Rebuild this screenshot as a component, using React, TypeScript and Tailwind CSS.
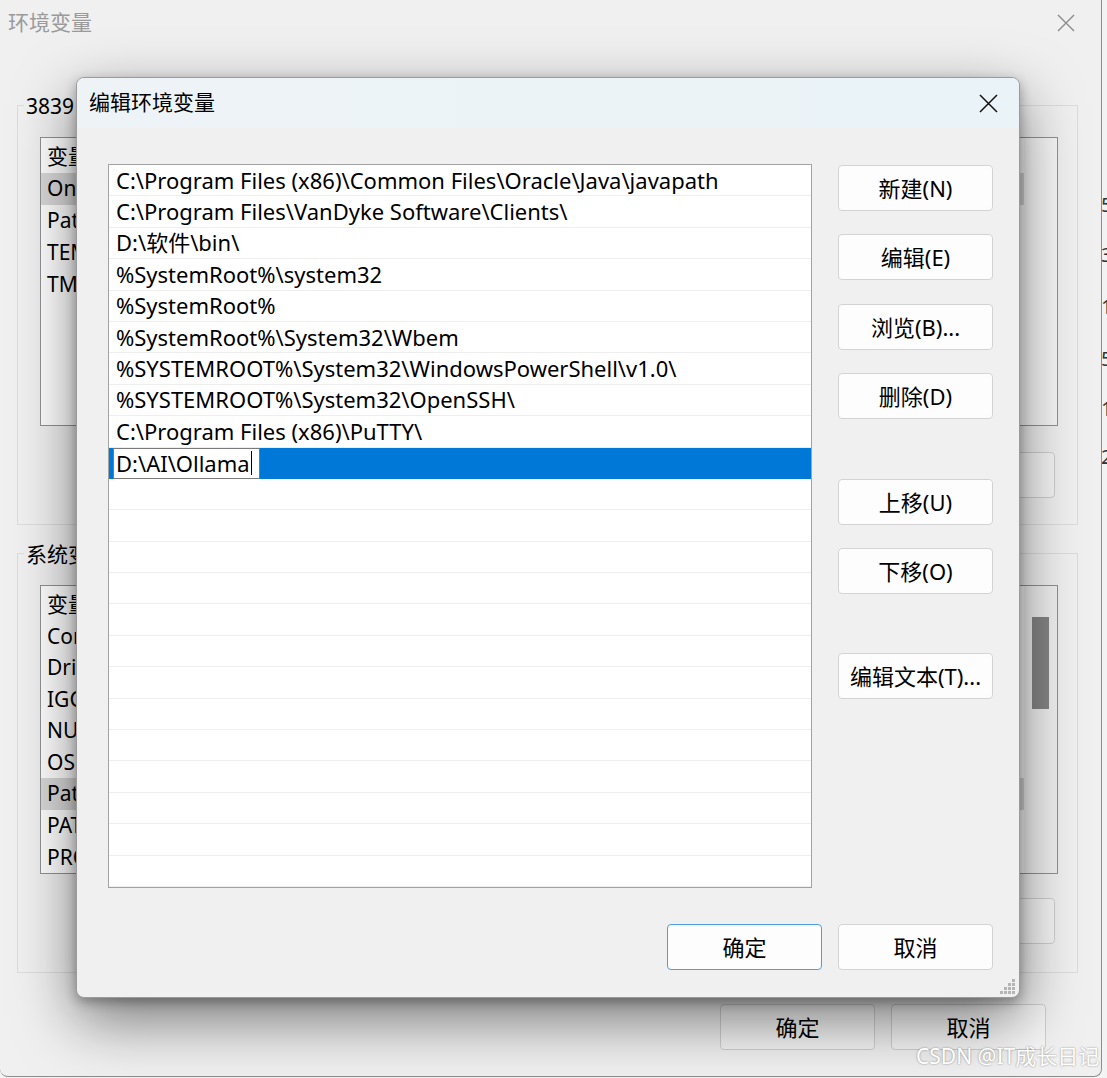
const paths = [
  "C:\\Program Files (x86)\\Common Files\\Oracle\\Java\\javapath",
  "C:\\Program Files\\VanDyke Software\\Clients\\",
  "D:\\软件\\bin\\",
  "%SystemRoot%\\system32",
  "%SystemRoot%",
  "%SystemRoot%\\System32\\Wbem",
  "%SYSTEMROOT%\\System32\\WindowsPowerShell\\v1.0\\",
  "%SYSTEMROOT%\\System32\\OpenSSH\\",
  "C:\\Program Files (x86)\\PuTTY\\",
];

const userVars = ["OneDrive", "Path", "TEMP", "TMP"];
const sysVars = [
  "ComSpec",
  "DriverData",
  "IGCCSVC_DB",
  "NUMBER_OF_PROCESSORS",
  "OS",
  "Path",
  "PATHEXT",
  "PROCESSOR_ARCHITECTURE",
];

function WinButton({ label, primary = false, dim = false }: { label: string; primary?: boolean; dim?: boolean }) {
  return (
    <div
      className={
        "w-[155px] h-[46px] rounded-[4px] border flex items-center justify-center text-[22px] text-black " +
        (primary
          ? "border-[#4f9ee0] bg-[#fdfdfd]"
          : dim
          ? "border-[#cfcfcf] bg-[#f5f5f5]"
          : "border-[#d3d3d3] bg-[#fdfdfd]")
      }
    >
      {label}
    </div>
  );
}

function BgList({ rows, hi, scroll = false }: { rows: string[]; hi: number; scroll?: boolean }) {
  return (
    <div className="ml-[22px] w-[1018px] h-[289px] border border-[#8f9295] bg-white flex">
      <div className="w-[983px] flex flex-col pt-[3px]">
        <div className="h-[32px] pl-[6px] flex items-center text-[21px]">变量</div>
        {rows.map((r, i) => (
          <div
            key={r}
            className={"h-[32px] pl-[6px] flex items-center text-[21px] " + (i === hi ? "bg-[#d9d9d9]" : "")}
          >
            {r}
          </div>
        ))}
      </div>
      <div className={"flex-1 flex justify-center pt-[31px] " + (scroll ? "bg-[#f0f0f0]" : "bg-[#f7f7f7]")}>
        {scroll && <div className="w-[17px] h-[92px] bg-[#858585]" />}
      </div>
    </div>
  );
}

function BackgroundWindow() {
  return (
    <div className="absolute left-0 top-0 w-[1102px] h-[1077px] bg-[#f0f0f0] border-r border-b border-[#8c8c8c] rounded-b-[8px] overflow-hidden">
      <div className="h-[45px] flex items-center justify-between pl-[8px] pr-[26px]">
        <span className="text-[21px] text-[#9a9a9a]">环境变量</span>
        <svg width="18" height="18" viewBox="0 0 18 18" className="text-[#8a8a8a]">
          <path d="M1 1L17 17M17 1L1 17" stroke="currentColor" strokeWidth="1.4" />
        </svg>
      </div>

      <div className="mt-[60px] ml-[17px] w-[1061px] h-[420px] border border-[#dcdcdc] relative">
        <span className="absolute left-[6px] -top-[15px] bg-[#f0f0f0] px-[2px] text-[21px]">3839</span>
        <div className="pt-[31px]">
          <BgList rows={userVars} hi={0} />
        </div>
        <div className="mt-[26px] flex justify-end pr-[22px]">
          <WinButton label="删除(D)" dim />
        </div>
      </div>

      <div className="mt-[28px] ml-[17px] w-[1061px] h-[420px] border border-[#dcdcdc] relative">
        <span className="absolute left-[6px] -top-[15px] bg-[#f0f0f0] px-[2px] text-[21px]">系统变</span>
        <div className="pt-[31px]">
          <BgList rows={sysVars} hi={5} scroll />
        </div>
        <div className="mt-[24px] flex justify-end pr-[22px]">
          <WinButton label="删除(L)" dim />
        </div>
      </div>

      <div className="mt-[31px] flex justify-end gap-[16px] pr-[55px]">
        <WinButton label="确定" dim />
        <WinButton label="取消" dim />
      </div>
    </div>
  );
}

function EditDialog() {
  const blank = Array.from({ length: 13 });
  return (
    <div className="absolute left-[76px] top-[77px] w-[944px] h-[921px] rounded-[8px] bg-[#f0f0f0] border border-[#9b9b9b] shadow-[0_4px_12px_rgba(0,0,0,0.3),0_22px_60px_rgba(0,0,0,0.5)] overflow-hidden flex flex-col">
      <div className="h-[50px] bg-[linear-gradient(90deg,#eef3f6,#eaf3f8)] flex items-center justify-between pl-[12px] pr-[21px]">
        <span className="text-[21px] text-black">编辑环境变量</span>
        <svg width="19" height="19" viewBox="0 0 19 19">
          <path d="M1 1L18 18M18 1L1 18" stroke="#111" strokeWidth="1.5" />
        </svg>
      </div>

      <div className="flex pt-[36px] pl-[31px]">
        <div className="w-[704px] h-[724px] border border-[#a2a2a2] bg-white flex flex-col overflow-hidden">
          {paths.map((p) => (
            <div key={p} className="h-[31.4px] shrink-0 border-b border-[#eeeeee] pl-[7px] flex items-center text-[22px] text-black whitespace-nowrap">
              {p}
            </div>
          ))}
          <div className="h-[31.4px] shrink-0 bg-[#0078d7] flex items-center">
            <div className="ml-[4px] w-[147px] h-full bg-white border border-[#7a7a7a] flex items-center pl-[2px] text-[22px] text-black whitespace-nowrap">
              D:\AI\Ollama<span className="ml-[1px] w-[1px] h-[24px] bg-black" />
            </div>
          </div>
          {blank.map((_, i) => (
            <div key={i} className="h-[31.4px] shrink-0 border-b border-[#eeeeee]" />
          ))}
        </div>

        <div className="ml-[26px] flex flex-col pt-[1px]">
          <WinButton label="新建(N)" />
          <div className="mt-[23px]"><WinButton label="编辑(E)" /></div>
          <div className="mt-[24px]"><WinButton label="浏览(B)..." /></div>
          <div className="mt-[23px]"><WinButton label="删除(D)" /></div>
          <div className="mt-[60px]"><WinButton label="上移(U)" /></div>
          <div className="mt-[23px]"><WinButton label="下移(O)" /></div>
          <div className="mt-[59px]"><WinButton label="编辑文本(T)..." /></div>
        </div>
      </div>

      <div className="flex justify-end gap-[16px] pr-[26px] mt-[36px]">
        <WinButton label="确定" primary />
        <WinButton label="取消" />
      </div>

      <div className="absolute right-[4px] bottom-[3px] grid grid-cols-4 gap-[1px] w-[15px] h-[15px]">
        {[0, 0, 0, 1, 0, 0, 1, 1, 0, 1, 1, 1, 1, 1, 1, 1].map((v, i) => (
          <div key={i} className={v ? "w-[3px] h-[3px] bg-[#b5b5b5]" : "w-[3px] h-[3px]"} />
        ))}
      </div>
    </div>
  );
}

export default function App() {
  return (
    <div
      className="relative w-[1107px] h-[1078px] bg-[#f3f3f3] overflow-hidden"
      style={{ fontFamily: '"Noto Sans", "Noto Sans CJK SC", sans-serif' }}
    >
      <div className="absolute left-[1097px] top-0 w-[20px] h-[1078px] flex flex-col text-[20px] text-[#333] pl-[4px]">
        <span className="mt-[190px]">5</span>
        <span className="mt-[20px]">3</span>
        <span className="mt-[22px]">1</span>
        <span className="mt-[22px]">5</span>
        <span className="mt-[20px]">1</span>
        <span className="mt-[18px]">2</span>
      </div>
      <BackgroundWindow />
      <EditDialog />
      <div className="absolute left-[916px] top-[1042px] text-[21px] leading-[28px] text-white [text-shadow:0_0_2px_rgba(0,0,0,0.45)]">
        CSDN @IT成长日记
      </div>
    </div>
  );
}
